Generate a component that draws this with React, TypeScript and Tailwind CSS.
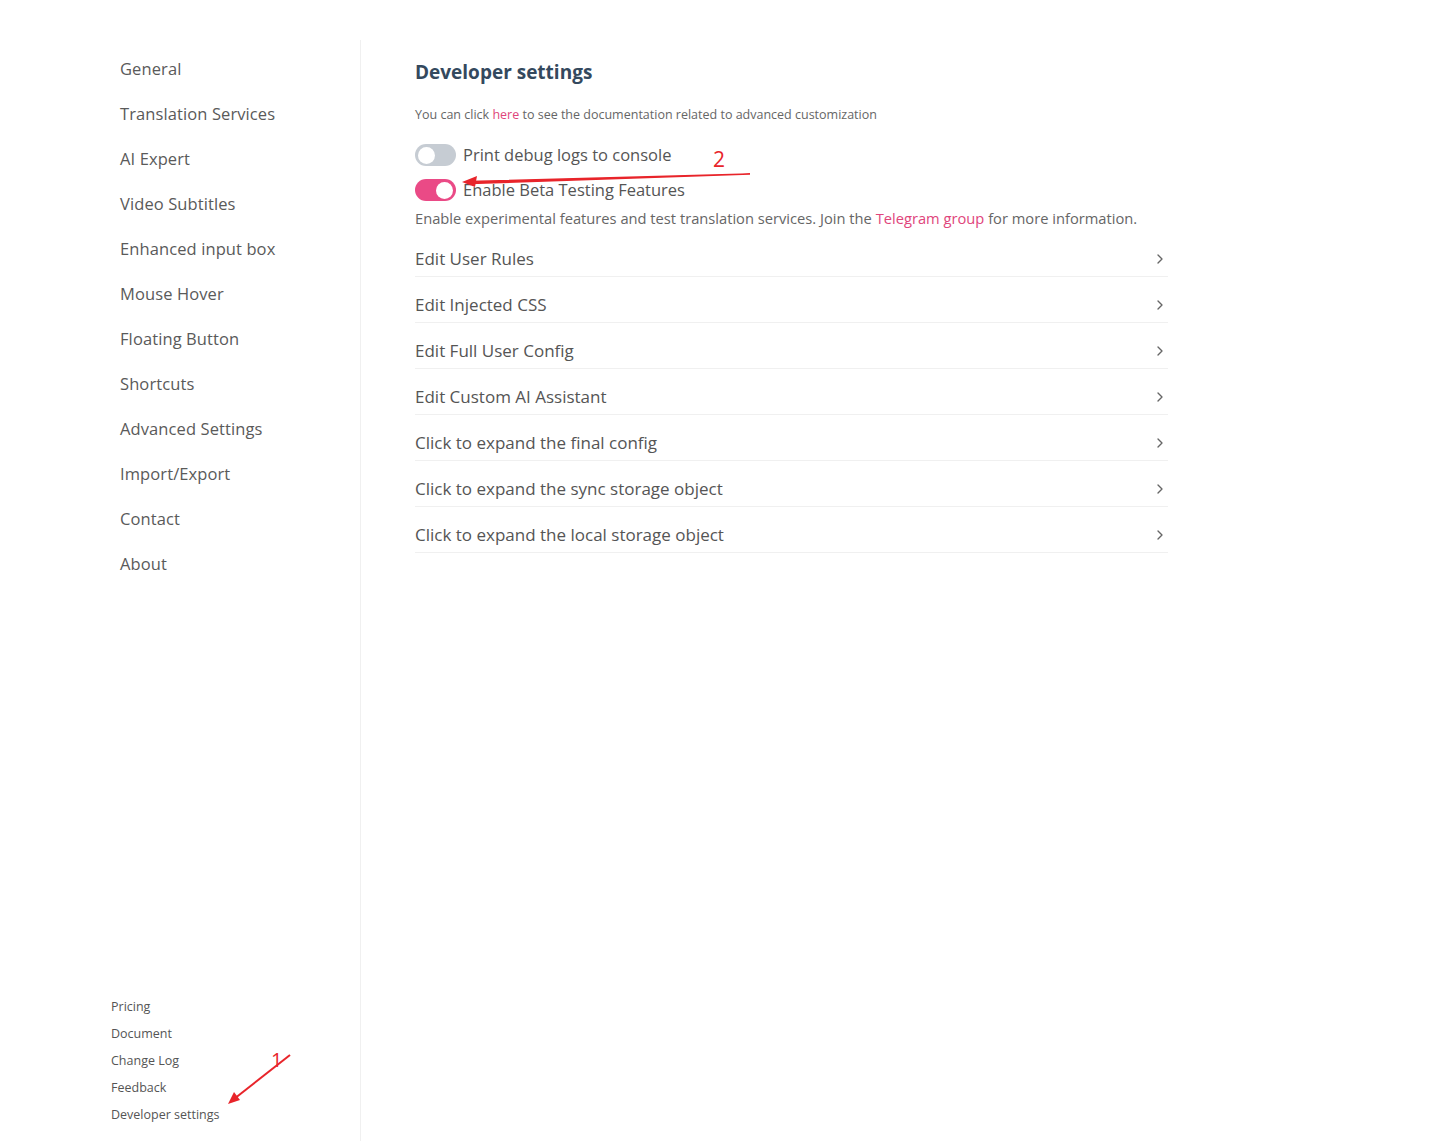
import { ChevronRight } from "lucide-react";

const navItems = [
  "General",
  "Translation Services",
  "AI Expert",
  "Video Subtitles",
  "Enhanced input box",
  "Mouse Hover",
  "Floating Button",
  "Shortcuts",
  "Advanced Settings",
  "Import/Export",
  "Contact",
  "About",
];

const footerLinks = ["Pricing", "Document", "Change Log", "Feedback", "Developer settings"];

const rows = [
  "Edit User Rules",
  "Edit Injected CSS",
  "Edit Full User Config",
  "Edit Custom AI Assistant",
  "Click to expand the final config",
  "Click to expand the sync storage object",
  "Click to expand the local storage object",
];

function Toggle({ on }: { on: boolean }) {
  return (
    <div
      className={
        on
          ? "flex h-[22px] w-[41px] shrink-0 items-center justify-end rounded-full bg-[#ea4a86] px-[3px]"
          : "flex h-[22px] w-[41px] shrink-0 items-center justify-start rounded-full bg-[#c6ccd3] px-[3px]"
      }
    >
      <div className="h-[17px] w-[17px] rounded-full bg-white" />
    </div>
  );
}

export default function App() {
  return (
    <div
      className="relative flex h-[1141px] w-full bg-white text-[#555]"
      style={{ fontFamily: "'Open Sans', 'Noto Sans', sans-serif" }}
    >
      <aside className="mt-10 flex w-[361px] shrink-0 flex-col justify-between border-r border-[#f0f0f0]">
        <nav className="flex flex-col pl-[120px] pt-[7px]">
          {navItems.map((item) => (
            <div key={item} className="flex h-[45px] items-center text-[16.5px] tracking-[0.1px] text-[#5a5a5a]">
              {item}
            </div>
          ))}
        </nav>
        <div className="flex flex-col pb-[12px] pl-[111px]">
          {footerLinks.map((item) => (
            <div key={item} className="flex h-[27px] items-center text-[12.5px] text-[#555]">
              {item}
            </div>
          ))}
        </div>
      </aside>

      <main className="flex w-[807px] flex-col pl-[54px] pt-[58px]">
        <h1 className="text-[19px] font-bold leading-[28px] text-[#34495e]">Developer settings</h1>
        <p className="mt-[21px] text-[12.5px] leading-[16px] text-[#666]">
          You can click <span className="text-[#e0457b]">here</span> to see the documentation related to advanced
          customization
        </p>
        <div className="mt-[20px] flex h-[24px] items-center gap-[7px]">
          <Toggle on={false} />
          <span className="text-[16.5px] text-[#555]">Print debug logs to console</span>
        </div>
        <div className="mt-[11px] flex h-[24px] items-center gap-[7px]">
          <Toggle on={true} />
          <span className="text-[16.5px] text-[#555]">Enable Beta Testing Features</span>
        </div>
        <p className="mt-[6px] text-[14.7px] leading-[20px] text-[#666]">
          Enable experimental features and test translation services. Join the{" "}
          <span className="text-[#e0457b]">Telegram group</span> for more information.
        </p>
        <div className="mt-[3px] flex flex-col">
          {rows.map((row) => (
            <div
              key={row}
              className="flex h-[46px] items-center justify-between border-b border-[#f0f0f0] pt-[10px]"
            >
              <span className="text-[17px] text-[#555]">{row}</span>
              <ChevronRight className="h-[16px] w-[16px] text-[#666]" strokeWidth={2} />
            </div>
          ))}
        </div>
      </main>

      {/* annotations */}
      <svg className="pointer-events-none absolute left-0 top-0" width="1455" height="1141">
        <path d="M750 174 L470 181.5 L470 183.5 Z" stroke="#e8242a" strokeWidth="1.5" fill="#e8242a" />
        <path d="M462 182 L477 176 L475 187 Z" fill="#e8242a" />
        <path d="M290 1055 L234 1099" stroke="#e8242a" strokeWidth="2" fill="none" />
        <path d="M228 1104 L234 1092 L240 1100 Z" fill="#e8242a" />
      </svg>
      <span className="absolute left-[713px] top-[145px] text-[21px] leading-[28px] text-[#e8242a]">2</span>
      <span className="absolute left-[271px] top-[1047px] text-[20px] leading-[26px] text-[#e8242a]">1</span>
    </div>
  );
}
